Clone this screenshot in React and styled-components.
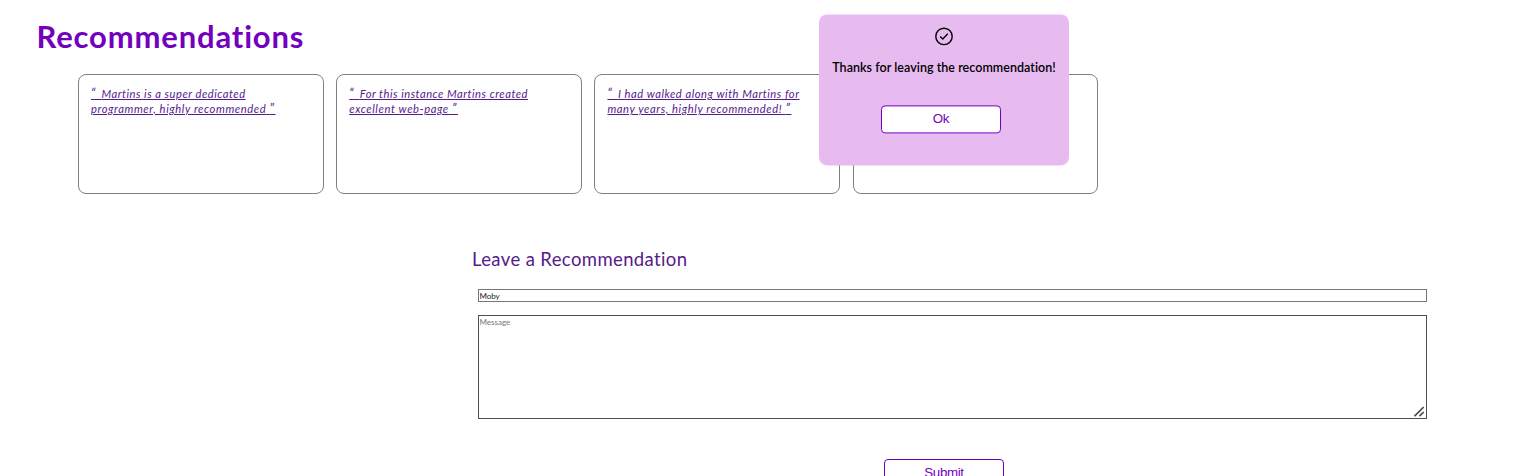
import React, { useState } from "react";
import styled, { createGlobalStyle } from "styled-components";

const GlobalStyle = createGlobalStyle`
  * { box-sizing: border-box; }
  body {
    margin: 0;
    background: #fff;
    font-family: "Trebuchet MS", Lato, "Open Sans", sans-serif;
    font-variant-ligatures: none;
  }
`;

const Page = styled.main`
  height: 476px;
  overflow: hidden;
`;

const Title = styled.h1`
  margin: 0;
  padding: 18px 0 0 36.5px;
  height: 74px;
  font-size: 31px;
  line-height: 37px;
  font-weight: 700;
  letter-spacing: 0.83px;
  color: #7300bd;
`;

const Cards = styled.section`
  display: flex;
  gap: 12.6px;
  padding-left: 78px;
`;

const Card = styled.article`
  width: 245.6px;
  height: 120px;
  padding: 11px 12px;
  border: 1px solid #808080;
  border-radius: 8px;
`;

const Quote = styled.p`
  margin: 0;
  font-size: 11.2px;
  line-height: 15px;
  font-style: italic;
  color: #551a8b;
  white-space: nowrap;
  text-decoration: underline;
`;

const Line = styled.span`
  display: block;
  letter-spacing: ${(p) => p.$track}px;
`;

const Mark = styled.span`
  font-size: 13px;
  line-height: 1;
  letter-spacing: 1.5px;
`;

const Form = styled.form`
  display: flex;
  flex-direction: column;
  width: 955px;
  margin: 54px 0 0 472px;
`;

const FormTitle = styled.h2`
  margin: 0 0 18px;
  font-size: 18.5px;
  line-height: 23px;
  font-weight: 400;
  letter-spacing: 0.38px;
  color: #551a8b;
`;

const NameField = styled.input`
  width: 949px;
  height: 13px;
  margin: 0 0 13px 6px;
  padding: 1px 0.5px;
  border: 1px solid #767676;
  border-radius: 0;
  outline: none;
  font: 8px "Trebuchet MS", Lato, sans-serif;
  letter-spacing: -0.1px;
  color: #222;
`;

const MessageBox = styled.div`
  position: relative;
  width: 949px;
  height: 104px;
  margin-left: 6px;
`;

const MessageField = styled.textarea`
  display: block;
  width: 100%;
  height: 100%;
  padding: 1px 0.5px;
  border: 1px solid #4f4f4f;
  border-radius: 0;
  outline: none;
  resize: none;
  font: 8px/11px "Trebuchet MS", Lato, sans-serif;
  &::placeholder { color: #757575; }
`;

const Grip = styled.svg`
  position: absolute;
  right: 2px;
  bottom: 2px;
`;

const Button = styled.button`
  width: 120px;
  height: 28px;
  padding: 0 0 2px;
  border: 1px solid #7300bd;
  border-radius: 4px;
  background: #fff;
  color: #7300bd;
  font: 13.333px "Liberation Sans", Arial, sans-serif;
  letter-spacing: -0.35px;
`;

const SubmitButton = styled(Button)`
  margin: 40px 0 0 412px;
`;

const Dialog = styled.div`
  position: absolute;
  top: 14px;
  left: 819px;
  transform: translateY(0.4px);
  display: flex;
  flex-direction: column;
  align-items: center;
  width: 250px;
  height: 151px;
  padding-top: 12px;
  border-radius: 8px;
  background: #e8bbf0;
`;

const DialogText = styled.p`
  margin: 13px 0 29px;
  font-size: 12.5px;
  line-height: 17px;
  font-weight: 600;
  letter-spacing: 0.04px;
  color: #000;
  white-space: nowrap;
`;

const OkButton = styled(Button)`
  margin-right: 6px;
`;

const quotes = [
  [["Martins is a super dedicated", 0.5], ["programmer, highly recommended", 0.6]],
  [["For this instance Martins created", 0.5], ["excellent web-page", 0.6]],
  [["I had walked along with Martins for", 0.52], ["many years, highly recommended!", 0.6]],
  [],
];

function CheckCircle() {
  return (
    <svg width="20" height="20" viewBox="0 0 20 20" fill="none" stroke="#000" strokeWidth="1.4">
      <circle cx="10" cy="10" r="8.2" />
      <path d="M6.2 10.2 8.8 12.7 13.8 7.4" />
    </svg>
  );
}

export default function App() {
  const [name, setName] = useState("Moby");
  return (
    <Page>
      <GlobalStyle />
      <Title>Recommendations</Title>
      <Cards>
        {quotes.map((lines, i) => (
          <Card key={i}>
            <Quote>
              {lines.map(([text, track], n) => (
                <Line key={text} $track={track}>
                  {n === 0 && <Mark>“ </Mark>}
                  {text}
                  {n === lines.length - 1 && <> <Mark>”</Mark></>}
                </Line>
              ))}
            </Quote>
          </Card>
        ))}
      </Cards>
      <Form onSubmit={(e) => e.preventDefault()}>
        <FormTitle>Leave a Recommendation</FormTitle>
        <NameField value={name} onChange={(e) => setName(e.target.value)} />
        <MessageBox>
          <MessageField placeholder="Message" />
          <Grip width="11" height="11" viewBox="0 0 11 11" stroke="#4a4a4a" strokeWidth="1.7">
            <path d="M.5 10.2 9.7 1M5.5 10.2 9.7 6" />
          </Grip>
        </MessageBox>
        <SubmitButton type="submit">Submit</SubmitButton>
      </Form>
      <Dialog role="dialog">
        <CheckCircle />
        <DialogText>Thanks for leaving the recommendation!</DialogText>
        <OkButton type="button">Ok</OkButton>
      </Dialog>
    </Page>
  );
}
